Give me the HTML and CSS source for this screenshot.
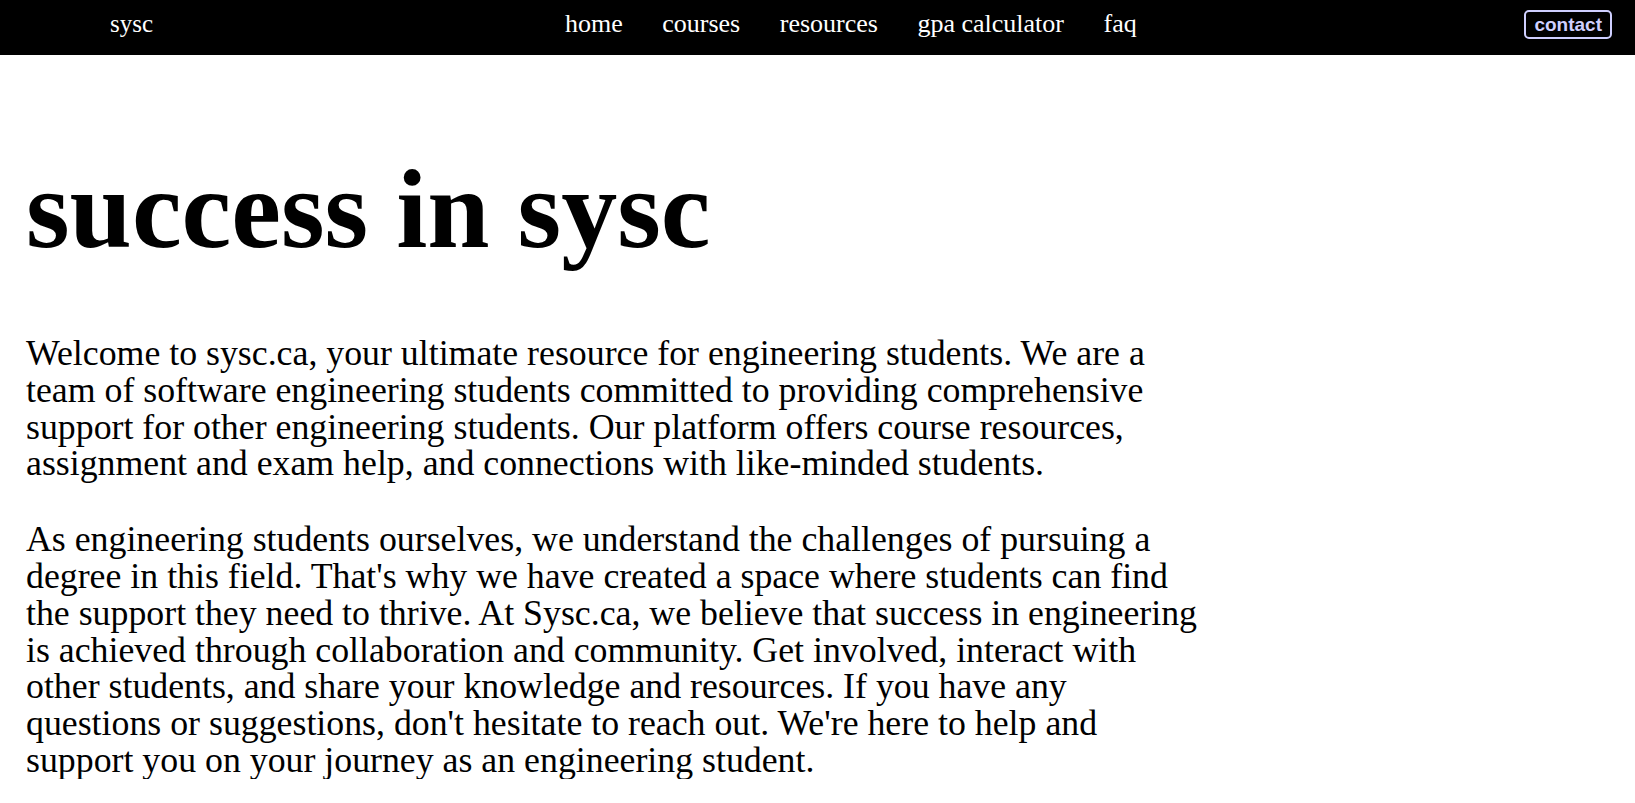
FILE: index.html
```html
<!DOCTYPE html>
<html lang="en">
<head>
<meta charset="utf-8">
<title>sysc</title>
<link rel="stylesheet" href="styles.css">
</head>
<body>
<nav class="topnav">
  <a class="brand" href="#">sysc</a>
  <ul class="links">
    <li><a href="#">home</a></li>
    <li><a href="#">courses</a></li>
    <li><a href="#">resources</a></li>
    <li><a href="#">gpa calculator</a></li>
    <li><a href="#">faq</a></li>
  </ul>
  <a class="contact" href="#">contact</a>
</nav>
<main class="content">
  <h1 class="title">success in sysc</h1>
  <p class="para">Welcome to sysc.ca, your ultimate resource for engineering students. We are a team of software engineering students committed to providing comprehensive support for other engineering students. Our platform offers course resources, assignment and exam help, and connections with like-minded students.</p>
  <p class="para">As engineering students ourselves, we understand the challenges of pursuing a degree in this field. That's why we have created a space where students can find the support they need to thrive. At Sysc.ca, we believe that success in engineering is achieved through collaboration and community. Get involved, interact with other students, and share your knowledge and resources. If you have any questions or suggestions, don't hesitate to reach out. We're here to help and support you on your journey as an engineering student.</p>
</main>
</body>
</html>
```
FILE: styles.css
```css
html, body {
  margin: 0;
  padding: 0;
  background: #ffffff;
}

body {
  font-family: "Liberation Serif", "Times New Roman", serif;
  color: #000000;
}

.topnav {
  box-sizing: border-box;
  height: 55px;
  background: #000000;
  display: flex;
  align-items: flex-start;
  padding: 9px 23px 0 110px;
}

.brand {
  width: 455px;
  flex: none;
  font-size: 25px;
  line-height: 30px;
  color: #ffffff;
  text-decoration: none;
}

.links {
  list-style: none;
  margin: 0;
  padding: 0;
  display: flex;
  gap: 39.5px;
}

.links a {
  font-size: 26px;
  line-height: 30px;
  color: #ffffff;
  text-decoration: none;
}

.contact {
  margin-left: auto;
  margin-top: 1px;
  font-family: "Liberation Sans", Arial, sans-serif;
  font-weight: 700;
  font-size: 19px;
  line-height: 21px;
  padding: 2px 8px;
  border: 2px solid #cfcfff;
  border-radius: 5px;
  color: #cfcfff;
  text-decoration: none;
}

.content {
  padding: 90px 26px 0 26px;
}

.title {
  margin: 0;
  font-size: 112px;
  line-height: 128px;
  font-weight: 700;
}

.para {
  max-width: 1176px;
  margin: 62px 0 0 0;
  font-size: 35.8px;
  line-height: 36.8px;
}

.para + .para {
  margin-top: 39px;
}
```
